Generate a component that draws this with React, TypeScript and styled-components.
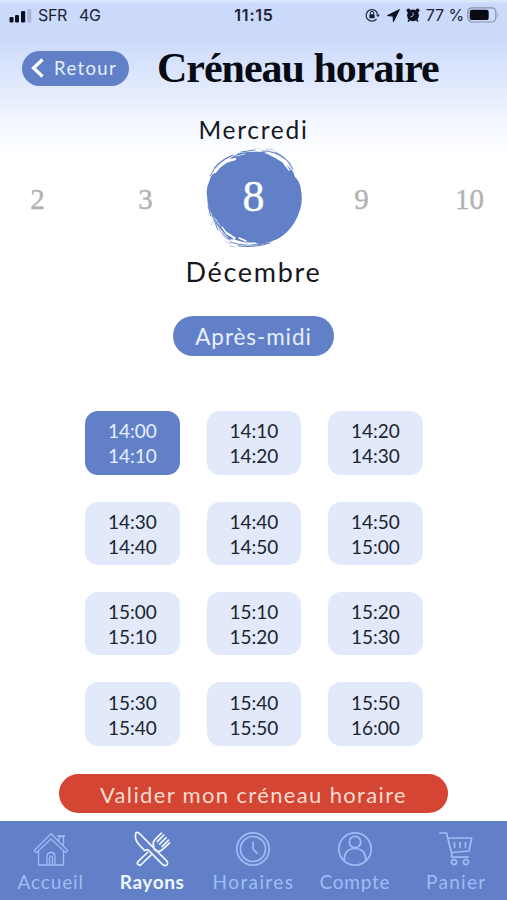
import React from "react";
import styled, { createGlobalStyle } from "styled-components";

const BLUE = "#6180c8";
const hand = `"Lato", "Open Sans", sans-serif`;
const serif = `"Liberation Serif", "DejaVu Serif", serif`;

const GlobalStyle = createGlobalStyle`
  * { box-sizing: border-box; }
  body { margin: 0; background: #fff; }
  button { border: 0; padding: 0; margin: 0; }
`;

const Screen = styled.div`
  width: 507px;
  height: 900px;
  display: flex;
  flex-direction: column;
  overflow: hidden;
  color: #161820;
  font-family: ${hand};
  background: linear-gradient(180deg, #d8e8fd 0, #d8e8fd 2px, #cad8fa 3px, #cddbfb 40px, #e3ebfd 90px, #f6f9ff 130px, #fff 158px);
`;

const StatusBar = styled.div`
  height: 30px;
  padding: 0 8px 0 9px;
  display: grid;
  grid-template-columns: 1fr auto 1fr;
  align-items: center;
  font: 400 16px/28px "Inter", sans-serif;
  color: #1b2236;
  white-space: pre;
`;

const StatusGroup = styled.div<{ $end?: boolean }>`
  display: flex;
  align-items: center;
  justify-content: ${(p) => (p.$end ? "flex-end" : "flex-start")};
`;

const Carrier = styled.span`
  margin-left: 6px;
  letter-spacing: -0.3px;
`;
const Network = styled.span`
  margin-left: 12px;
  letter-spacing: -0.4px;
`;
const Clock = styled.span`
  font-weight: 600;
  letter-spacing: 0.8px;
`;
const Percent = styled.span`
  margin: 0 3px 0 6px;
  letter-spacing: -0.1px;
`;
const StatusIcon = styled.svg<{ $gap?: number }>`
  flex: none;
  margin-left: ${(p) => p.$gap ?? 0}px;
`;

const Header = styled.header`
  height: 76px;
  display: flex;
  align-items: center;
  padding-left: 22px;
`;

const BackButton = styled.button`
  width: 107px;
  height: 35px;
  border-radius: 18px;
  background: ${BLUE};
  color: #e6efff;
  display: flex;
  align-items: center;
  padding-left: 9px;
  gap: 9px;
  font: 400 18.5px/34px ${hand};
  letter-spacing: 1.4px;
`;

const Title = styled.h1`
  margin: 0 0 0 28px;
  font: 700 42px/50px ${serif};
  letter-spacing: -1px;
  color: #080b14;
  white-space: nowrap;
`;

const DateLabel = styled.div<{ $size: number; $spacing: number; $height: number }>`
  height: ${(p) => p.$height}px;
  flex: none;
  text-align: center;
  font-size: ${(p) => p.$size}px;
  line-height: 48px;
  letter-spacing: ${(p) => p.$spacing}px;
`;

const DayStrip = styled.div`
  height: 99px;
  flex: none;
  display: grid;
  grid-template-columns: 75px 141px 75px 141px 75px;
  grid-template-rows: 99px;
  align-items: center;
`;

const Day = styled.div`
  text-align: center;
  font: 400 29px/40px ${serif};
  color: #b1b1b3;
  -webkit-text-stroke: 0.4px #b1b1b3;
`;

const SelectedDay = styled.div`
  display: grid;
  place-items: center;
  justify-content: center;
  grid-template: 99px / 98px;
  > * { grid-area: 1 / 1; }
`;

const SelectedNumber = styled.span`
  z-index: 1;
  padding-bottom: 3px;
  color: #fff;
  font: 400 44px/50px ${serif};
  -webkit-text-stroke: 0.4px #fff;
`;

const PeriodButton = styled.button`
  width: 161px;
  height: 40px;
  margin: 20px auto 0;
  flex: none;
  border-radius: 20px;
  background: ${BLUE};
  color: #e6efff;
  padding-top: 1px;
  font: 400 22.5px/39px ${hand};
  letter-spacing: 0.9px;
`;

const Slots = styled.div`
  display: grid;
  grid-template-columns: repeat(3, 94.5px);
  grid-auto-rows: 63.4px;
  gap: 27px;
  justify-content: center;
  margin-top: 55.2px;
  padding-left: 0.6px;
`;

const Slot = styled.button<{ $selected: boolean }>`
  border-radius: 13px;
  background: ${(p) => (p.$selected ? BLUE : "#e1e9fa")};
  color: ${(p) => (p.$selected ? "#e6efff" : "#20242e")};
  display: flex;
  flex-direction: column;
  align-items: center;
  justify-content: center;
  padding-top: 1px;
  font: 400 19px/25px ${hand};
`;

const Confirm = styled.button`
  width: 389px;
  height: 39px;
  margin: 28px auto 0;
  flex: none;
  border-radius: 20px;
  background: #d44533;
  color: #fbdcd0;
  padding-top: 1px;
  font: 400 22px/40px ${hand};
  letter-spacing: 1.35px;
`;

const TabBar = styled.nav`
  height: 79px;
  flex: none;
  margin-top: auto;
  display: grid;
  grid-template-columns: repeat(5, 1fr);
  background: ${BLUE};
`;

const Tab = styled.div<{ $active: boolean }>`
  color: ${(p) => (p.$active ? "#eef7ff" : "#9fbcf5")};
  padding-top: 9px;
  display: flex;
  flex-direction: column;
  align-items: center;
`;

const TabLabel = styled.span<{ $bold: boolean; $spacing: number }>`
  font-size: 19px;
  line-height: 27px;
  font-weight: ${(p) => (p.$bold ? 700 : 400)};
  letter-spacing: ${(p) => p.$spacing}px;
`;

const Brush = () => (
  <svg width="98" height="101" viewBox="0 0 98 101">
    <path
      fill={BLUE}
      d="M2 48Q1 40 4 34 6 26 11 23L20 15Q24 13 27 9L34 5Q47 3 60 4L66 8Q75 10 81 17 88 22 90 29 95 33 96 42 98 53 95 62 91 75 82 84 73 93 60 95L54 97 44 96 31 92 24 91 17 83 12 77 8 68 5 63Q2 56 2 48Z"
    />
    <g fill="none" stroke={BLUE} strokeWidth="1" strokeLinecap="round">
      <path d="M5 28Q12 14 28 7M9 20Q17 11 26 8M36 4 50 2M57 3Q68 2 80 11M70 4Q82 9 88 21M3 58 6 68M7 67 13 82M14 80Q18 88 25 92M25 94Q41 100 63 95M33 98Q50 100 65 95" />
      <path strokeWidth=".6" strokeOpacity=".65" d="M50 0h6M61 1l8 1M81 11l5 5M5 61l-1 6M8 74l-2 3M17 87l6 5M20 93l5 3M24 98l6 1M83 15l6 10" />
    </g>
    <g fill="none" stroke="#fff" strokeLinecap="round">
      <path strokeWidth="2.4" d="M10 24Q15 17 23 13L30 11" />
      <path strokeWidth="1.4" d="M68 8 78 14 84 22M75 11 82 17M17 79 22 86 30 90M21 84l6 4 3 5M28 93l10 2M34 90l7 3M43 96l7-1" />
      <path strokeWidth=".7" d="M14 18l7-5M31 8l9-2M60 5l9 2M10 70l5 8M14 80l3 4M39 94l14 2M8 26l5-5" />
    </g>
  </svg>
);

const line = { fill: "none", stroke: "currentColor", strokeWidth: 1.7, strokeLinecap: "round", strokeLinejoin: "round" } as const;

const icons = {
  home: (
    <g {...line} strokeWidth="1.3">
      <path d="m2.3 20.5 2.2 2.1L19 9l14.5 13.6 2.2-2.1L19 3.8ZM6.5 20.8V35H15V27q0-4.5 4-4.5t4 4.5v8h8.5V20.8M17.500 35v-7q0-1.800 1.500-1.800t1.500 1.800V35M15 35h8M27 10.500V6.500h4.500v8.200" />
      <path d="M26 6h6.500" />
    </g>
  ),
  cutlery: (
    <g {...line}>
      <path d="M3 2.8Q1 9 5.5 14l6 6.4 3.3-.7L30 34.8q3 1.8 4.500-.5.8-1.800-.8-3.500L6 3.200Q4.500 1.700 3 2.800Z" />
      <path d="m14.5 22.5-9.600 9.100q-1.200 1.900.2 3.100 1.500 1.200 3.100-.2l10-9.600M21 19l2.500 1.800q3.500 1.500 6.500-1.600l6.500-6.400M21 16.600q-2-4 1.100-7.300l6.300-6.100M30.800 5l-6.500 6.600M33.200 7.600l-6.500 6.600M35.500 10.200l-6.400 6.500" />
    </g>
  ),
  clock: (
    <g {...line}>
      <circle cx="19" cy="19" r="16.2" />
      <circle cx="19" cy="19" r="12.5" />
      <path d="M19 12v7.200l4 3.900" />
    </g>
  ),
  user: (
    <g {...line}>
      <circle cx="19" cy="19" r="16.2" />
      <circle cx="19" cy="12" r="5.7" />
      <path d="M8.300 30.500v-2.500Q9.500 18.500 19 18.500t10.700 9.500v2.500" />
    </g>
  ),
  cart: (
    <g {...line}>
      <path d="M3 3h6.500L15 25q-1.500 2 .5 2.200H31M10.700 8h24L32 21 14.200 22.500" />
      <path d="M17.500 12.500v5M23 12.500v5M28.500 12.500v5" />
      <circle cx="17" cy="32" r="2.500" />
      <circle cx="29" cy="32" r="2.500" />
    </g>
  ),
};

type IconName = keyof typeof icons;

const tabs: { label: string; icon: IconName; spacing: number }[] = [
  { label: "Accueil", icon: "home", spacing: 0.9 },
  { label: "Rayons", icon: "cutlery", spacing: 0.6 },
  { label: "Horaires", icon: "clock", spacing: 1.4 },
  { label: "Compte", icon: "user", spacing: 0.8 },
  { label: "Panier", icon: "cart", spacing: 1.3 },
];

const times = ["14:00", "14:10", "14:20", "14:30", "14:40", "14:50", "15:00", "15:10", "15:20", "15:30", "15:40", "15:50", "16:00"];

export default function App() {
  return (
    <Screen>
      <GlobalStyle />
      <StatusBar>
        <StatusGroup>
          <StatusIcon width="23" height="15" viewBox="0 0 23 15" fill="#0b1020">
            <rect x="0.5" y="9" width="4" height="5.5" rx="1.2" />
            <rect x="6" y="7" width="4" height="7.5" rx="1.2" />
            <rect x="12" y="3" width="4.2" height="11.5" rx="1.2" />
            <rect x="18.3" y="1" width="4" height="13.5" rx="1.2" fill="#a8b4d2" />
          </StatusIcon>
          <Carrier>SFR</Carrier>
          <Network>4G</Network>
        </StatusGroup>
        <Clock>11:15</Clock>
        <StatusGroup $end>
          <StatusIcon width="15" height="14" viewBox="0 0 15 14">
            <path d="M12.600 6A5.800 5.800 0 1 0 11.500 11" fill="none" stroke="#293149" strokeWidth="1.3" />
            <path d="M10.800 6.400h4.200L12.900 9.300Z" fill="#293149" />
            <rect x="4.4" y="6.2" width="5.2" height="4" rx=".6" fill="#151b2c" />
            <path d="M5.400 6.500V5a1.600 1.600 0 0 1 3.200 0v1.500" fill="none" stroke="#151b2c" />
          </StatusIcon>
          <StatusIcon $gap={7} width="13" height="13" viewBox="0 0 13 13">
            <path d="M12.400.5.5 6.600l5.600.5.3 5.600Z" fill="#0b1020" stroke="#0b1020" strokeLinejoin="round" />
          </StatusIcon>
          <StatusIcon $gap={6} width="14" height="14" viewBox="0 0 14 14" fill="#0b1020">
            <circle cx="7" cy="7.3" r="5.9" />
            <circle cx="2.5" cy="2.5" r="2" />
            <circle cx="11.5" cy="2.5" r="2" />
            <path d="M2 13.500 4 11M12 13.500 10 11" stroke="#0b1020" strokeWidth="1.5" />
            <path d="M7.200 4.500v3.200L4.500 9" fill="none" stroke="#d5dff9" strokeWidth=".8" />
          </StatusIcon>
          <Percent>77 %</Percent>
          <StatusIcon width="32" height="16" viewBox="0 0 32 16">
            <rect x=".8" y=".8" width="28" height="14.2" rx="4.2" fill="none" stroke="#8991a7" strokeWidth="1.2" />
            <rect x="2.7" y="2.7" width="19" height="10.4" rx="2.2" fill="#080b14" />
            <path d="M30.500 5.500q1.700 2.400 0 5Z" fill="#8991a7" />
          </StatusIcon>
        </StatusGroup>
      </StatusBar>

      <Header>
        <BackButton>
          <svg width="14" height="20" viewBox="0 0 14 20">
            <path d="M11.500 1.500 2.500 10l9 8.500" fill="none" stroke="#fff" strokeWidth="3.2" />
          </svg>
          Retour
        </BackButton>
        <Title>Créneau horaire</Title>
      </Header>

      <DateLabel $size={24.5} $spacing={1.7} $height={43}>Mercredi</DateLabel>
      <DayStrip>
        <Day>2</Day>
        <Day>3</Day>
        <SelectedDay>
          <Brush />
          <SelectedNumber>8</SelectedNumber>
        </SelectedDay>
        <Day>9</Day>
        <Day>10</Day>
      </DayStrip>
      <DateLabel $size={27} $spacing={1.7} $height={48}>Décembre</DateLabel>

      <PeriodButton>Après-midi</PeriodButton>

      <Slots>
        {times.slice(0, -1).map((start, i) => (
          <Slot key={start} $selected={i === 0}>
            <span>{start}</span>
            <span>{times[i + 1]}</span>
          </Slot>
        ))}
      </Slots>

      <Confirm>Valider mon créneau horaire</Confirm>

      <TabBar>
        {tabs.map(({ label, icon, spacing }) => (
          <Tab key={label} $active={icon === "cutlery"}>
            <svg width="38" height="38" viewBox="0 0 38 38">{icons[icon]}</svg>
            <TabLabel $bold={icon === "cutlery"} $spacing={spacing}>{label}</TabLabel>
          </Tab>
        ))}
      </TabBar>
    </Screen>
  );
}
